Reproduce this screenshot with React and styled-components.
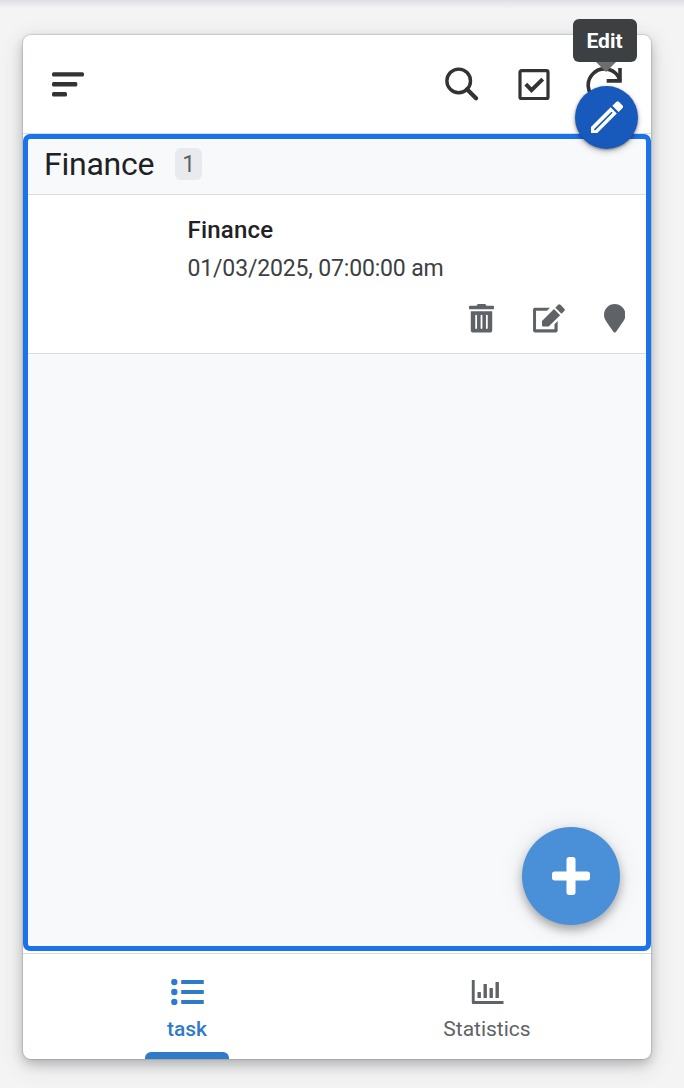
import React from "react";
import styled, { createGlobalStyle } from "styled-components";
import { FaTrashAlt, FaMapMarker } from "react-icons/fa";

const GlobalStyle = createGlobalStyle`
  * { box-sizing: border-box; }
  body { margin: 0; background: #f4f4f4; font-family: Roboto, "Liberation Sans", sans-serif; }
  svg { display: block; flex: none; }
`;

const Page = styled.div`
  height: 1088px;
  padding: 35px 33px 29px 23px;
  background: linear-gradient(#dcdee1, #e6e7e9 3px, #f4f4f4 9px);
  overflow: hidden;
`;

const Phone = styled.div`
  position: relative;
  height: 1024px;
  display: flex;
  flex-direction: column;
  background: #fff;
  border-radius: 8px;
  box-shadow: 0 0 1px 1px rgba(0, 0, 0, 0.12), 0 5px 11px rgba(60, 64, 67, 0.28),
    0 6px 24px rgba(60, 64, 67, 0.16);
`;

const TopBar = styled.header`
  height: 99px;
  flex: none;
  display: flex;
  align-items: center;
  justify-content: space-between;
  padding: 0 29px;
  border-bottom: 1px solid #d9dbde;
`;

const Actions = styled.div`
  display: flex;
  align-items: center;
  gap: 36px;

  svg:first-child { margin-right: 3.3px; }
`;

const Glyph = styled.svg`
  width: ${(p) => p.$w}px;
  height: ${(p) => p.$h}px;
  color: ${(p) => p.$color || "#333"};
`;

const Frame = styled.main`
  position: relative;
  height: 817px;
  flex: none;
  border: 5px solid #1a73e8;
  border-radius: 7px;
  background: #f8f9fb;
`;

const GroupHeader = styled.div`
  height: 56px;
  display: flex;
  align-items: center;
  gap: 21px;
  padding: 0 16px 5px;
  border-bottom: 1px solid #dadce0;
`;

const GroupTitle = styled.h1`
  margin: 0;
  font-size: 32px;
  line-height: 40px;
  font-weight: 400;
  letter-spacing: -0.24px;
  color: #202124;
`;

const Badge = styled.span`
  width: 27px;
  height: 32px;
  border-radius: 6px;
  background: #e8eaed;
  color: #5f6368;
  font-size: 23px;
  line-height: 33px;
  text-align: center;
`;

const Task = styled.article`
  height: 159px;
  display: flex;
  flex-direction: column;
  padding: 18px 21px 0 159.5px;
  background: #fff;
  border-bottom: 1px solid #dadce0;
`;

const TaskTitle = styled.h2`
  margin: 0;
  font-size: 24px;
  line-height: 34px;
  font-weight: 500;
  letter-spacing: 0.2px;
  color: #202124;
`;

const TaskDate = styled.div`
  margin-top: 5px;
  font-size: 23px;
  line-height: 34px;
  letter-spacing: -0.16px;
  color: #3c4043;
  white-space: nowrap;
`;

const TaskActions = styled.div`
  display: flex;
  justify-content: flex-end;
  gap: 38.7px;
  margin-top: 18px;
  color: #5f6368;
`;

const AddButton = styled.button`
  position: absolute;
  right: 26px;
  bottom: 21px;
  width: 98px;
  height: 98px;
  display: grid;
  place-items: center;
  padding: 0;
  border: 0;
  border-radius: 50%;
  background: #4a90d9;
  box-shadow: 0 5px 10px rgba(0, 0, 0, 0.3), 0 1px 26px rgba(0, 0, 0, 0.1);
`;

const TabBar = styled.nav`
  height: 107px;
  flex: none;
  display: flex;
  margin-top: 2px;
  padding: 0 14px;
  border-top: 1px solid #d9dbde;
  border-radius: 0 0 8px 8px;
`;

const Tab = styled.div`
  position: relative;
  flex: 1;
  display: flex;
  flex-direction: column;
  align-items: center;
  padding-top: 25px;
  color: ${(p) => (p.$active ? "#2f7bc9" : "#5f6368")};
  font-size: 21px;
  line-height: 30px;
  font-weight: ${(p) => (p.$active ? 500 : 400)};

  svg { margin-bottom: 9px; }
`;

const Indicator = styled.span`
  position: absolute;
  bottom: 1px;
  width: 84px;
  height: 7px;
  border-radius: 6px 6px 0 0;
  background: #2f7bc9;
`;

const EditButton = styled.button`
  position: absolute;
  top: 51px;
  right: 13px;
  width: 63px;
  height: 63px;
  display: grid;
  place-items: center;
  padding: 0;
  border: 0;
  border-radius: 50%;
  background: #185abc;
  box-shadow: 0 1px 3px rgba(0, 0, 0, 0.4), 0 3px 6px rgba(0, 0, 0, 0.2);
`;

const Tooltip = styled.div`
  position: absolute;
  top: -16px;
  right: 14.5px;
  width: 64px;
  height: 43px;
  border-radius: 6px;
  background: #3c4043;
  color: #fff;
  font-size: 21px;
  line-height: 44px;
  font-weight: 700;
  text-align: center;

  &::after {
    content: "";
    position: absolute;
    top: 100%;
    left: 23px;
    border: 10px solid transparent;
    border-bottom: 0;
    border-top-color: #6c6f72;
  }
`;

const MenuIcon = () => (
  <Glyph $w={32} $h={25} viewBox="0 0 32 25" fill="currentColor">
    <rect y="0.2" width="32" height="4.4" rx="1.5" />
    <rect y="10.1" width="25.3" height="4.4" rx="1.5" />
    <rect y="20" width="15" height="4.4" rx="1.5" />
  </Glyph>
);

const SearchIcon = () => (
  <Glyph $w={34} $h={34} viewBox="0 0 34 34" fill="none" stroke="currentColor">
    <circle cx="13.7" cy="13.9" r="11.8" strokeWidth="3.4" />
    <path d="M22 22.3 31 31.3" strokeWidth="4.2" strokeLinecap="round" />
  </Glyph>
);

const CheckIcon = () => (
  <Glyph $w={32} $h={32} viewBox="0 0 32 32" fill="none" stroke="currentColor" strokeWidth="3.2">
    <rect x="2" y="2.7" width="28" height="28" rx="1.5" />
    <path d="m7.8 16.2 5.7 6L24.7 11.1" strokeWidth="4" />
  </Glyph>
);

const RefreshIcon = () => (
  <Glyph $w={36} $h={36} viewBox="0 0 36 36" fill="none" stroke="currentColor" strokeWidth="3.6">
    <path d="M33.5 25.6A16.3 16.3 0 1 1 32 10L34 14.4" />
    <path d="M34 2V14.9H20.7" />
  </Glyph>
);

const PencilIcon = () => (
  <Glyph $w={33.3} $h={33.3} $color="#fff" viewBox="60 137.5 100 100" fill="currentColor">
    <path
      fillRule="evenodd"
      d="M63 233.500V215.500L122 156.500L140.500 175L82 233.500ZM72.500 225H76L128 173L124.500 169.500L72.500 221.500Z"
    />
    <path d="M127 152 139.500 139.500Q143 136.500 146.500 139.500L158.500 151.500Q161 155 158.500 157.500L146 170.500Z" />
  </Glyph>
);

const ComposeIcon = () => (
  <Glyph $w={32} $h={28.6} $color="inherit" viewBox="246 72 96 86" fill="currentColor">
    <path d="M251 83H297L288 92.500H255V148H310.500V133L320 123.500V152Q320 158 314 158H252Q246 158 246 152V89Q246 83 251 83Z" />
    <path d="M309 87 327.500 105.500 293 140H277Q273 140 273 136V123Z" />
    <path d="M313 83 321.500 74.500Q325 71.500 328.500 74.500L340 86Q343 89.500 340 93L331.500 101.500Z" />
  </Glyph>
);

const PlusIcon = () => (
  <Glyph $w={38} $h={38} $color="#fff" viewBox="0 0 38 38" fill="currentColor">
    <rect x="14.5" width="9" height="38" rx="2.7" />
    <rect y="14.5" width="38" height="9" rx="2.7" />
  </Glyph>
);

const ListIcon = () => (
  <Glyph $w={33} $h={26} $color="inherit" viewBox="0 0 33 26" fill="currentColor">
    {[3, 13, 23].map((y) => (
      <g key={y}>
        <circle cx="3.3" cy={y} r="3.2" />
        <rect x="10.2" y={y - 2} width="22.6" height="4" rx="0.5" />
      </g>
    ))}
  </Glyph>
);

const ChartIcon = () => (
  <Glyph $w={33} $h={26} $color="inherit" viewBox="0 0 33 26" fill="currentColor">
    <path d="M0.8 1H3.7V22H32.5V25H2Q0.8 25 0.8 23.8Z" />
    <rect x="6.5" y="13" width="3.4" height="6" rx="0.5" />
    <rect x="12.5" y="5" width="3.4" height="14" rx="0.5" />
    <rect x="18.5" y="9" width="3.4" height="10" rx="0.5" />
    <rect x="24.5" y="3" width="3.4" height="16" rx="0.5" />
  </Glyph>
);

export default function App() {
  return (
    <Page>
      <GlobalStyle />
      <Phone>
        <TopBar>
          <MenuIcon />
          <Actions>
            <SearchIcon />
            <CheckIcon />
            <RefreshIcon />
          </Actions>
        </TopBar>
        <Frame>
          <GroupHeader>
            <GroupTitle>Finance</GroupTitle>
            <Badge>1</Badge>
          </GroupHeader>
          <Task>
            <TaskTitle>Finance</TaskTitle>
            <TaskDate>01/03/2025, 07:00:00 am</TaskDate>
            <TaskActions>
              <Glyph as={FaTrashAlt} $w={25} $h={28.6} $color="inherit" />
              <ComposeIcon />
              <Glyph as={FaMapMarker} $w={21.5} $h={28.6} $color="inherit" />
            </TaskActions>
          </Task>
          <AddButton aria-label="Add">
            <PlusIcon />
          </AddButton>
        </Frame>
        <TabBar>
          <Tab $active>
            <ListIcon />
            task
            <Indicator />
          </Tab>
          <Tab>
            <ChartIcon />
            Statistics
          </Tab>
        </TabBar>
        <Tooltip>Edit</Tooltip>
        <EditButton aria-label="Edit">
          <PencilIcon />
        </EditButton>
      </Phone>
    </Page>
  );
}
